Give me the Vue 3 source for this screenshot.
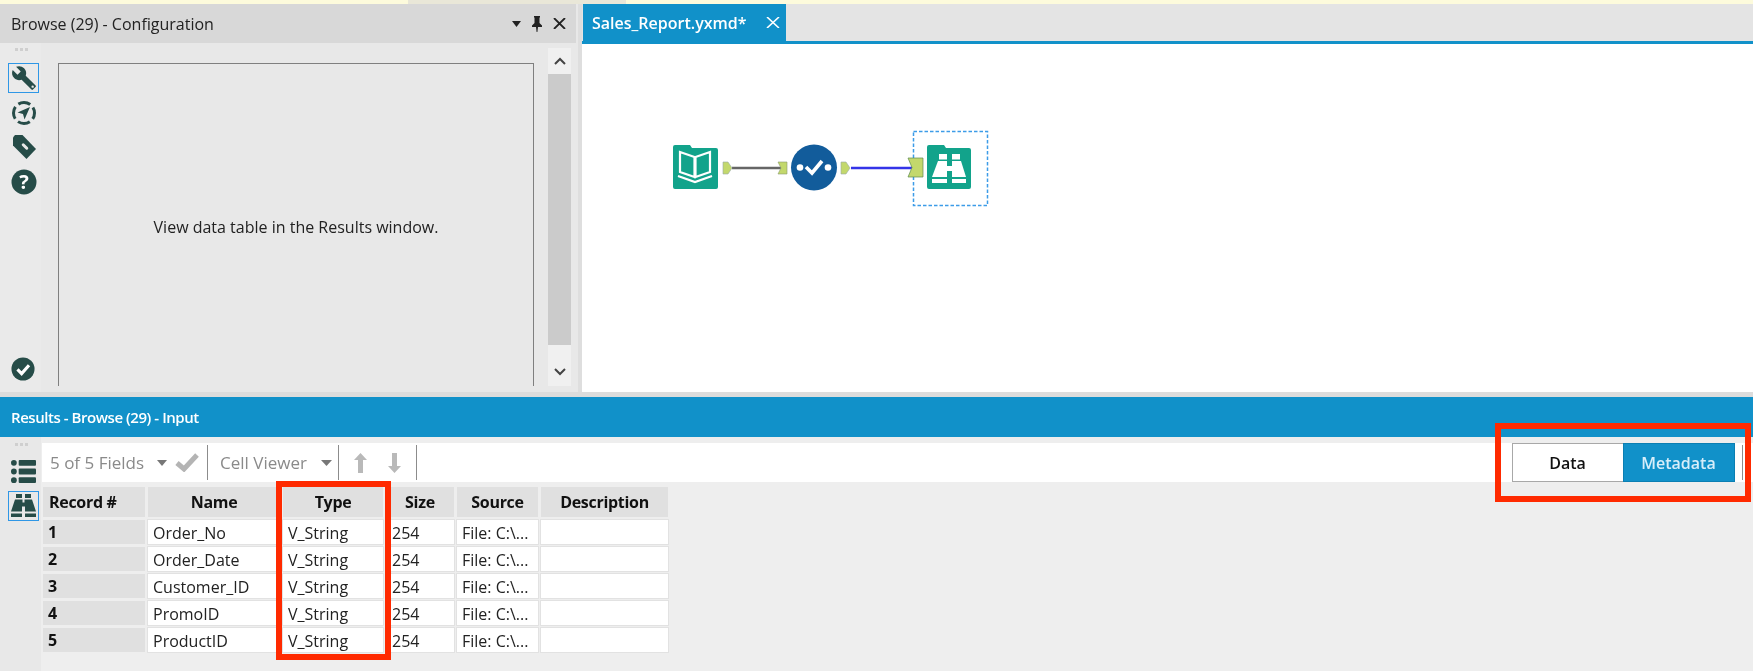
<template>
  <div class="app">
    <div class="notice-strip"></div>

    <div class="workspace">
      <section class="config-panel">
        <header class="config-title">
          <span>Browse (29) - Configuration</span>
          <div class="window-buttons">
            <svg width="9" height="6" viewBox="0 0 9 6"><path d="M0 0h9L4.500 6z" fill="#222" /></svg>
            <svg width="10" height="16" viewBox="0 0 10 16">
              <path d="M2 0h6v1L7.500 2v5L10 9.500V11H6L5.400 16H4.600L4 11H0V9.500L2.500 7V2L2 1z" fill="#222" />
            </svg>
            <svg width="13" height="11" viewBox="0 0 13 11">
              <path d="M1 0l11 11M12 0L1 11" stroke="#222" stroke-width="1.800" fill="none" />
            </svg>
          </div>
        </header>

        <div class="config-body">
          <aside class="side-tools">
            <div class="grip"><i></i><i></i><i></i></div>
            <div class="tool-btn active">
              <svg width="26" height="26" viewBox="0 0 24 24">
                <path
                  d="M22.700 19l-9.100-9.100c.9-2.300.4-5-1.500-6.900-2-2-5-2.400-7.400-1.300L9 6 6 9 1.600 4.700C.4 7.100.9 10.100 2.900 12.100c1.900 1.900 4.600 2.400 6.900 1.500l9.100 9.100c.4.4 1 .4 1.400 0l2.300-2.300c.5-.4.5-1.100.1-1.400z"
                  fill="#264c48"
                />
                <circle cx="20" cy="20" r="1.100" fill="#e8e8e8" />
              </svg>
            </div>
            <div class="tool-btn">
              <svg width="26" height="26" viewBox="0 0 26 26">
                <circle cx="13" cy="13" r="10.500" fill="none" stroke="#264c48" stroke-width="3" stroke-dasharray="12.500 4" stroke-dashoffset="6.250" />
                <path d="M19 7L6.500 12.500l5.500 1.500 1.500 5.500z" fill="#264c48" />
              </svg>
            </div>
            <div class="tool-btn">
              <svg width="26" height="26" viewBox="0 0 26 26">
                <path d="M2 3.500L4 1h7.500L25 15l-9.500 10L2 11.500z" fill="#264c48" />
                <rect x="10" y="11" width="8" height="3" rx="1.500" transform="rotate(45 14 12.500)" fill="#e8e8e8" />
              </svg>
            </div>
            <div class="tool-btn">
              <svg width="26" height="26" viewBox="0 0 26 26">
                <circle cx="13" cy="13" r="12.500" fill="#264c48" />
                <text x="13" y="20" text-anchor="middle" class="glyph">?</text>
              </svg>
            </div>
            <div class="validated">
              <svg width="24" height="24" viewBox="0 0 26 26">
                <circle cx="13" cy="13" r="12.500" fill="#264c48" />
                <path d="M7 13.500l4.500 4.500L19.500 9" fill="none" stroke="#fff" stroke-width="3.400" />
              </svg>
            </div>
          </aside>

          <div class="config-content">
            <div class="group-box">View data table in the Results window.</div>
            <div class="scrollbar">
              <div class="scroll-btn">
                <svg width="12" height="8" viewBox="0 0 12 8"><path d="M1 7l5-5 5 5" fill="none" stroke="#444" stroke-width="2" /></svg>
              </div>
              <div class="scroll-thumb"></div>
              <div class="scroll-btn lower">
                <svg width="12" height="8" viewBox="0 0 12 8"><path d="M1 1l5 5 5-5" fill="none" stroke="#444" stroke-width="2" /></svg>
              </div>
            </div>
          </div>
        </div>
      </section>

      <section class="canvas-panel">
        <div class="tab-strip">
          <div class="tab">
            <span>Sales_Report.yxmd*</span>
            <svg width="14" height="11" viewBox="0 0 14 11">
              <path d="M1 0l12 11M13 0L1 11" stroke="#fff" stroke-width="1.600" fill="none" />
            </svg>
          </div>
        </div>
        <div class="canvas">
          <svg class="workflow" width="340" height="100" viewBox="660 120 340 100">
            <!-- input tool -->
            <path
              d="M675 145h15l2 3h24a2 2 0 0 1 2 2v37a2 2 0 0 1-2 2h-41a2 2 0 0 1-2-2v-40a2 2 0 0 1 2-2z"
              fill="#12a38b"
            />
            <g fill="none" stroke="#fff" stroke-width="2.200">
              <path d="M694.500 157L680 152v20l14.500 5z" />
              <path d="M695.500 157L710 152v20l-14.500 5z" />
              <path d="M678 176l17 6 17-6" />
            </g>
            <path d="M732 168h49" stroke="#666" stroke-width="2.400" />
            <path d="M723 162h5l4 6-4 6h-5z" fill="#c3d86c" stroke="#9aa" stroke-width="0.600" />
            <path d="M778 162h9v12h-9l3-6z" fill="#c3d86c" stroke="#8a9a70" stroke-width="0.600" />

            <!-- select tool -->
            <circle cx="814" cy="167.500" r="23" fill="#125c9b" />
            <circle cx="800" cy="167.500" r="3.300" fill="#fff" />
            <circle cx="828" cy="167.500" r="3.300" fill="#fff" />
            <path d="M806 167l6 6 10-12" fill="none" stroke="#fff" stroke-width="3.600" />
            <path d="M841 162h5l4 6-4 6h-5z" fill="#c3d86c" stroke="#9aa" stroke-width="0.600" />
            <path d="M851 168h61" stroke="#3434e8" stroke-width="2.600" />

            <!-- browse tool -->
            <rect x="913.500" y="131.500" width="74" height="74" fill="none" stroke="#3c9ce8" stroke-width="1.500" stroke-dasharray="3.500 2" />
            <path
              d="M929 145h15l2 3h23a2 2 0 0 1 2 2v37a2 2 0 0 1-2 2h-40a2 2 0 0 1-2-2v-40a2 2 0 0 1 2-2z"
              fill="#12a38b"
            />
            <g fill="#fff">
              <rect x="939" y="154" width="8" height="5.500" />
              <rect x="952" y="154" width="8" height="5.500" />
              <path d="M938 161h9v5h5v-5h9l5 16h-14v-6h-5v6h-15z" />
              <rect x="932" y="179" width="15" height="4" />
              <rect x="952" y="179" width="14" height="4" />
            </g>
            <path d="M908 158h15v19h-15l4-9.500z" fill="#c3d86c" stroke="#5b8a50" stroke-width="0.700" />
          </svg>
        </div>
      </section>
    </div>

    <div class="splitter"></div>

    <section class="results">
      <header class="results-title">Results - Browse (29) - Input</header>
      <div class="results-body">
        <aside class="results-side">
          <div class="grip"><i></i><i></i><i></i></div>
          <svg class="list-icon" width="25" height="25" viewBox="0 0 26 25">
            <g fill="#264c48">
              <circle cx="3" cy="3.500" r="3" /><rect x="8" y="0.500" width="18" height="6" rx="1" />
              <circle cx="3" cy="12.500" r="3" /><rect x="8" y="9.500" width="18" height="6" rx="1" />
              <circle cx="3" cy="21.500" r="3" /><rect x="8" y="18.500" width="18" height="6" rx="1" />
            </g>
          </svg>
          <div class="tool-btn active">
            <svg width="25" height="24" viewBox="0 0 25 24">
              <g fill="#264c48">
                <rect x="5" y="0" width="6" height="4" />
                <rect x="14" y="0" width="6" height="4" />
                <path d="M4 5.500h7.500v3h2v-3H21l4 12H14v-5h-3v5H0z" />
                <path d="M0 19.500h11V23H0zM14 19.500h11V23H14z" />
              </g>
            </svg>
          </div>
        </aside>

        <div class="results-main">
          <div class="toolbar">
            <div class="tb-group fields">
              <span>5 of 5 Fields</span>
              <svg class="caret" width="10" height="6" viewBox="0 0 10 6"><path d="M0 0h10L5 6z" fill="#777" /></svg>
              <svg class="tick" width="24" height="19" viewBox="0 0 24 19">
                <path d="M2 10l7 6L22 2" fill="none" stroke="#b4b4b4" stroke-width="5" />
              </svg>
            </div>
            <div class="tb-group viewer">
              <span>Cell Viewer</span>
              <svg class="caret" width="11" height="6" viewBox="0 0 11 6"><path d="M0 0h11L5.500 6z" fill="#777" /></svg>
            </div>
            <div class="tb-group arrows">
              <svg width="13" height="20" viewBox="0 0 13 20"><path d="M6.500 0L13 7H9v13H4V7H0z" fill="#b9b9b9" /></svg>
              <svg width="13" height="20" viewBox="0 0 13 20"><path d="M6.500 20L13 13H9V0H4v13H0z" fill="#b9b9b9" /></svg>
            </div>
            <div class="view-switch">
              <button class="switch-btn">Data</button>
              <button class="switch-btn on">Metadata</button>
            </div>
            <div class="end-sep"></div>
          </div>

          <div class="meta-grid">
            <div class="head">Record #</div>
            <div class="head center">Name</div>
            <div class="head center">Type</div>
            <div class="head center">Size</div>
            <div class="head center">Source</div>
            <div class="head center">Description</div>
            <template v-for="(field, i) in fields" :key="field">
              <div class="rec">{{ i + 1 }}</div>
              <div class="cell">{{ field }}</div>
              <div class="cell">V_String</div>
              <div class="cell size">254</div>
              <div class="cell">File: C:\...</div>
              <div class="cell"></div>
            </template>
          </div>
        </div>

        <div class="callout callout-type"></div>
        <div class="callout callout-switch"></div>
      </div>
    </section>
  </div>
</template>

<script setup>
const fields = ['Order_No', 'Order_Date', 'Customer_ID', 'PromoID', 'ProductID']
</script>

<style>
html,
body {
  margin: 0;
  background: #eee;
}
</style>

<style scoped>
.app {
  width: 1753px;
  height: 671px;
  overflow: hidden;
  display: flex;
  flex-direction: column;
  font-family: 'Open Sans', 'Liberation Sans', sans-serif;
  color: #222;
  background: #eee;
  filter: blur(0.4px);
}

.notice-strip {
  height: 4px;
  flex: none;
  background: linear-gradient(90deg, #fdfbdc 408px, #e9e7d8 408px, #e9e7d8 626px, #fdfbdc 626px);
}

.workspace {
  height: 388px;
  flex: none;
  display: flex;
  gap: 2px;
  background: #dedede;
}

.config-panel {
  width: 578px;
  padding-right: 2px;
  box-sizing: border-box;
  display: flex;
  flex-direction: column;
  background: #e8e8e8;
}

.config-title {
  height: 39px;
  flex: none;
  display: flex;
  align-items: center;
  justify-content: space-between;
  padding: 0 10px 0 11px;
  background: #d8d8d8;
  font-size: 16px;
}

.window-buttons {
  display: flex;
  align-items: center;
  gap: 11px;
}

.config-body {
  flex: 1;
  display: flex;
  min-height: 0;
}

.side-tools {
  width: 41px;
  flex: none;
  padding: 5px 0 6px 6px;
  box-sizing: border-box;
  display: flex;
  flex-direction: column;
  align-items: center;
  background: #eaeaea;
}

.grip {
  display: flex;
  justify-content: center;
  gap: 2px;
  height: 15px;
  margin-left: -5px;
}

.grip i {
  width: 3px;
  height: 3px;
  background: #cfcfcf;
}

.tool-btn {
  width: 31px;
  height: 30px;
  flex: none;
  display: flex;
  align-items: center;
  justify-content: center;
  box-sizing: border-box;
  margin-bottom: 4.500px;
}

.tool-btn.active {
  border: 1.5px solid #2f97e6;
}

.glyph {
  font: 700 20px 'Open Sans', sans-serif;
  fill: #fff;
}

.validated {
  margin-top: auto;
  margin-bottom: 5px;
  margin-left: -1px;
  height: 24px;
}

.config-content {
  flex: 1;
  display: flex;
  min-width: 0;
  padding: 5px 5px 6px 17px;
  gap: 14px;
}

.group-box {
  flex: 1;
  margin-top: 15px;
  padding-top: 152px;
  box-sizing: border-box;
  border: 1.5px solid #7f7f7f;
  border-bottom: 0;
  text-align: center;
  font-size: 16px;
  color: #222;
}

.scrollbar {
  width: 23px;
  flex: none;
  display: flex;
  flex-direction: column;
  background: #ececec;
}

.scroll-btn {
  height: 26px;
  flex: none;
  display: flex;
  align-items: center;
  justify-content: center;
  background: #f0f0f0;
}

.scroll-btn.lower {
  height: 41px;
  padding-top: 12px;
  box-sizing: border-box;
}

.scroll-thumb {
  flex: 1;
  background: #cbcbcb;
}

.canvas-panel {
  flex: 1;
  display: flex;
  flex-direction: column;
  min-width: 0;
  background: #fff;
  margin-left: 2px;
}

.tab-strip {
  height: 37px;
  flex: none;
  display: flex;
  padding-left: 1px;
  background: #e4e4e4;
}

.tab {
  width: 203px;
  display: flex;
  align-items: center;
  justify-content: space-between;
  box-sizing: border-box;
  padding: 0 6px 0 9px;
  background: #1191c9;
  color: #fff;
  font-size: 16px;
  font-weight: 600;
}

.canvas {
  flex: 1;
  border-top: 3px solid #1191c9;
  overflow: hidden;
}

.workflow {
  display: block;
  margin: 76px 0 0 78px;
}

.splitter {
  height: 5px;
  flex: none;
  background: #dcdcdc;
}

.results {
  flex: 1;
  display: flex;
  flex-direction: column;
  min-height: 0;
}

.results-title {
  height: 40px;
  flex: none;
  display: flex;
  align-items: center;
  padding-left: 11px;
  background: #1191c9;
  color: #fff;
  font-size: 15px;
  font-weight: 600;
  letter-spacing: -0.45px;
}

.results-body {
  flex: 1;
  display: flex;
  position: relative;
  min-height: 0;
}

.results-side {
  width: 41px;
  flex: none;
  box-sizing: border-box;
  padding: 6px 0 0 6px;
  display: flex;
  flex-direction: column;
  align-items: center;
  background: #e8e8e8;
}

.results-side .grip {
  height: 16px;
}

.list-icon {
  margin-bottom: 7px;
  margin-left: -1px;
}

.results-main {
  flex: 1;
  min-width: 0;
  padding-top: 6px;
}

.toolbar {
  height: 39px;
  margin-left: 1px;
  display: flex;
  align-items: center;
  background: #fff;
  font-size: 17px;
  color: #8a8a8a;
}

.tb-group {
  height: 35px;
  display: flex;
  align-items: center;
  box-sizing: border-box;
  border-right: 1.5px solid #8c8c8c;
}

.fields {
  width: 166px;
  padding-left: 8px;
}

.fields .caret {
  margin-left: 13px;
}

.tick {
  margin-left: 8px;
}

.viewer {
  width: 131px;
  padding-left: 12px;
}

.viewer .caret {
  margin-left: 14px;
}

.arrows {
  width: 78px;
  padding-left: 15px;
  gap: 21px;
}

.view-switch {
  margin-left: auto;
  display: flex;
  width: 223px;
  height: 39px;
}

.switch-btn {
  flex: 1;
  padding: 0;
  border: 1.5px solid #a8a8a8;
  border-right: 0;
  background: #fff;
  color: #111;
  font: 600 16px 'Open Sans', sans-serif;
}

.switch-btn.on {
  flex: none;
  width: 112px;
  border: 1.5px solid #0b7fb3;
  background: #1191c9;
  color: #d7eefa;
}

.end-sep {
  width: 1.500px;
  height: 35px;
  margin: 0 10px 0 7px;
  background: #8c8c8c;
}

.meta-grid {
  display: grid;
  grid-template-columns: 102px 132px 100px 68px 81px 127px;
  grid-template-rows: 30px repeat(5, 24px);
  gap: 3px;
  width: max-content;
  margin: 5px 0 0 2px;
  font-size: 16px;
}

.head {
  display: flex;
  align-items: center;
  padding-left: 6px;
  background: #e0e0e0;
  color: #111;
  font-weight: 700;
  letter-spacing: -0.3px;
}

.head.center {
  justify-content: center;
  padding-left: 0;
}

.rec {
  padding: 1px 0 0 5px;
  box-sizing: border-box;
  background: #e0e0e0;
  color: #111;
  font-weight: 700;
}

.cell {
  padding: 2px 0 0 5px;
  box-sizing: border-box;
  background: #fff;
  outline: 1px solid #e2e2e2;
  white-space: nowrap;
  overflow: hidden;
}

.cell.size {
  padding-left: 6px;
}

.callout {
  position: absolute;
  box-sizing: border-box;
  border: 6px solid #ff2a00;
  pointer-events: none;
}

.callout-type {
  left: 276px;
  top: 44px;
  width: 115px;
  height: 179px;
}

.callout-switch {
  left: 1495px;
  top: -14px;
  width: 256px;
  height: 79px;
}
</style>
